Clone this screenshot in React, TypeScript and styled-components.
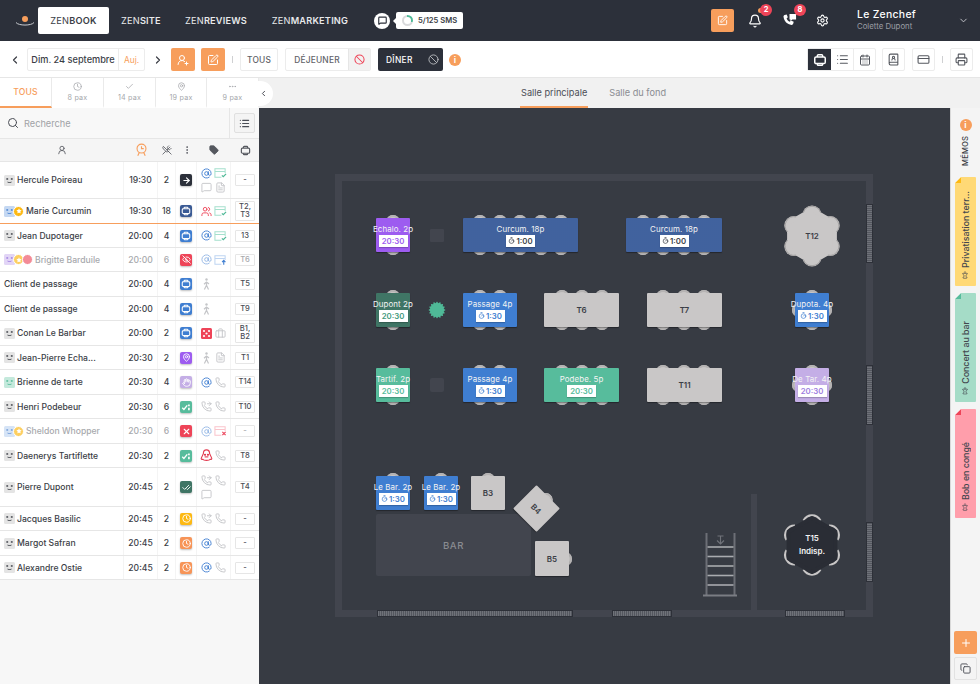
import React from "react";
import styled, { createGlobalStyle } from "styled-components";
import {
  ChevronLeft, ChevronRight, ChevronDown, UserRoundPlus, SquarePen, Ban, Clock, Check, MapPin, Ellipsis,
  Search, CalendarDays, BookUser, CreditCard, Printer, Bell, Settings, MessageSquare, AtSign,
  Phone, Users, Briefcase, X, ArrowRight, EyeOff, Timer, Plus, Copy, Pin,
  UtensilsCrossed, EllipsisVertical, Tag, UserRound, List, PhoneForwarded, CheckCheck, FileText, Hand, Star,
} from "lucide-react";

const GlobalStyle = createGlobalStyle`
  html, body { margin: 0; padding: 0; height: 100%; }
  body { font-family: Inter, "Open Sans", "Liberation Sans", sans-serif; color: #3b3e46; background: #fff; }
  #root { height: 100%; }
  * { box-sizing: border-box; }
`;

const FX = 259;
const FY = 108;
const ORANGE = "#f79e5c";
const DARK = "#2c303a";

/* ---------- drawn icons ---------- */
const TableIcon = ({ size = 12, color = "currentColor" }: { size?: number; color?: string }) => (
  <svg width={size} height={size} viewBox="0 0 16 16" fill="none" stroke={color} strokeWidth="1.7">
    <rect x="2" y="4.5" width="12" height="7.5" rx="1.5" />
    <path d="M5 4.5V3a1 1 0 0 1 1-1h4a1 1 0 0 1 1 1v1.5M5 12v1a1 1 0 0 0 1 1h4a1 1 0 0 0 1-1v-1" />
  </svg>
);
const Face = ({ color = "#3b3e46" }: { color?: string }) => (
  <svg width="9" height="9" viewBox="0 0 10 10" fill={color}>
    <rect x="1.5" y="2.5" width="2" height="1.6" />
    <rect x="6.5" y="2.5" width="2" height="1.6" />
    <path d="M3 6.2c1.2.9 2.8.9 4 0l.4.8c-1.4 1.2-3.4 1.2-4.8 0z" />
  </svg>
);
const CardMark = ({ kind }: { kind: "check" | "up" | "x" }) => {
  const c = kind === "check" ? "#a5e0cd" : kind === "up" ? "#bfd5f2" : "#fac4cb";
  const m = kind === "check" ? "#4fb997" : kind === "up" ? "#3f7ed1" : "#ec4a60";
  return (
    <svg width="13" height="12" viewBox="0 0 14 12" fill="none" strokeWidth="1.1">
      <path d="M8 10.5H1V1.5h11V6M1 4.5h11" stroke={c} />
      {kind === "check" && <path d="M8.5 8.5l1.5 1.5 3-3" stroke={m} strokeWidth="1.3" />}
      {kind === "up" && <path d="M10.5 11V6.5M8.7 8.2l1.8-1.8 1.8 1.8" stroke={m} strokeWidth="1.2" />}
      {kind === "x" && <path d="M9 7l3.5 3.5M12.5 7L9 10.5" stroke={m} strokeWidth="1.3" />}
    </svg>
  );
};
const Sheep = () => (
  <svg width="13" height="13" viewBox="0 0 14 14" fill="none" stroke="#e13a4f" strokeWidth="1.2">
    <path d="M7 1C4.6 1 3.6 3 3.6 5L1.4 9.8c-.5 1.3.8 1.8 1.6 1.2.9 1.7 7.1 1.7 8 0 .8.6 2.1.1 1.6-1.2L10.4 5C10.4 3 9.4 1 7 1z" />
    <circle cx="5.4" cy="6.2" r=".6" fill="#e13a4f" />
    <circle cx="8.6" cy="6.2" r=".6" fill="#e13a4f" />
    <path d="M5 8.5h4" />
  </svg>
);
const Walker = () => (
  <svg width="11" height="12" viewBox="0 0 11 12" fill="#c4c5c8" stroke="#c4c5c8">
    <circle cx="5.5" cy="1.5" r="1.2" stroke="none" />
    <path d="M5.5 3.4v4M5.5 7.2L3.4 11.4M5.5 7.2l2 4.2M5.5 4L3 6.2M5.5 4l2.5 2" fill="none" strokeWidth="1.2" />
  </svg>
);
const Dice = () => (
  <svg width="11" height="11" viewBox="0 0 11 11">
    <rect width="11" height="11" rx="1.5" fill="#ee4458" />
    {[[3, 3], [8, 3], [5.5, 5.5], [3, 8], [8, 8]].map(([x, y]) => (
      <circle key={`${x}${y}`} cx={x} cy={y} r="1.1" fill="#fff" />
    ))}
  </svg>
);
const SentMark = () => (
  <svg width="10" height="10" viewBox="0 0 12 12" fill="none" stroke="#fff" strokeWidth="1.6">
    <path d="M1.5 7l2 2 4-5" />
    <path d="M9.5 7v3M9.5 3v2" strokeWidth="2" />
  </svg>
);
const HeaderClock = () => (
  <svg width="13" height="14" viewBox="0 0 14 15" fill="none" stroke={ORANGE} strokeWidth="1.2">
    <circle cx="7" cy="6" r="4.8" />
    <path d="M7 3.4V6h2.4M4.5 10.5L3 13.6M9.5 10.5L11 13.6" />
  </svg>
);
const PhoneBubble = () => (
  <svg width="15" height="15" viewBox="0 0 16 16" fill="#fff">
    <path d="M2.8 2.2l2.2-.6 1.2 3-1.3 1.2c.6 1.5 1.8 2.8 3.4 3.5l1.2-1.3 3 1.2-.6 2.3c-.2.8-1 1.3-1.8 1.2C5.6 12.2 2.4 9 1.6 4c-.1-.8.4-1.6 1.2-1.8z" />
    <path d="M8 1h7v6H11L9 8.6V7H8z" />
  </svg>
);
const Logo = () => (
  <svg width="20" height="14" viewBox="0 0 20 14" fill="none">
    <circle cx="10" cy="5" r="3" fill={ORANGE} />
    <path d="M1 8.5c2.5 3.4 15.5 3.4 18 0" stroke="#c9cbd0" strokeWidth="1" />
  </svg>
);
const FloorHatch = styled.div<{ $x: number; $y: number; $w: number; $h: number }>`
  position: absolute;
  left: ${(p) => p.$x - FX}px;
  top: ${(p) => p.$y - FY}px;
  width: ${(p) => p.$w}px;
  height: ${(p) => p.$h}px;
  background: repeating-linear-gradient(90deg, #6f7279 0 1px, #54575f 1px 2px);
  border: 1px solid #2d3038;
`;
const FloorHatchV = styled(FloorHatch)`
  background: repeating-linear-gradient(0deg, #6f7279 0 1px, #54575f 1px 2px);
`;

/* ---------- top bar ---------- */
const Page = styled.div`
  width: 980px;
  height: 684px;
  overflow: hidden;
  display: flex;
  flex-direction: column;
`;
const TopBar = styled.header`
  height: 41px;
  flex: none;
  background: ${DARK};
  display: flex;
  align-items: center;
  color: #fff;
  padding-left: 15px;
`;
const Nav = styled.nav`
  display: flex;
  align-items: center;
  margin-left: 3px;
`;
const NavItem = styled.div<{ $active?: boolean; $w: number }>`
  width: ${(p) => p.$w}px;
  height: 27px;
  display: flex;
  align-items: center;
  justify-content: center;
  font-size: 9.2px;
  letter-spacing: 0.2px;
  font-weight: 400;
  color: ${(p) => (p.$active ? "#3b3e46" : "#e8e9eb")};
  background: ${(p) => (p.$active ? "#fff" : "transparent")};
  border-radius: 2px;
  b { font-weight: 600; }
`;
const ChatDot = styled.div`
  width: 16px;
  height: 16px;
  border-radius: 50%;
  background: #fff;
  color: ${DARK};
  display: flex;
  align-items: center;
  justify-content: center;
`;
const SmsPill = styled.div`
  position: relative;
  margin-left: 6px;
  width: 67px;
  height: 17px;
  background: #fff;
  border-radius: 2px;
  display: flex;
  align-items: center;
  gap: 5px;
  padding-left: 6px;
  font-size: 7.6px;
  font-weight: 600;
  color: #3b3e46;
  &::before {
    content: "";
    position: absolute;
    left: -3px;
    top: 6px;
    border: 3px solid transparent;
    border-left: 0;
    border-right-color: #fff;
  }
`;
const Ring = styled.div`
  width: 11px;
  height: 11px;
  border-radius: 50%;
  background: conic-gradient(#4fb997 0 30%, #d9dadc 30% 100%);
  display: flex;
  align-items: center;
  justify-content: center;
  &::after {
    content: "";
    width: 7px;
    height: 7px;
    border-radius: 50%;
    background: #fff;
  }
`;
const TopRight = styled.div`
  margin-left: auto;
  display: flex;
  align-items: center;
`;
const OrangeSquare = styled.div<{ $w?: number; $h?: number }>`
  width: ${(p) => p.$w ?? 24}px;
  height: ${(p) => p.$h ?? 23}px;
  background: ${ORANGE};
  border-radius: 2px;
  display: flex;
  align-items: center;
  justify-content: center;
  color: #fff;
  flex: none;
`;
const BellSlot = styled.div<{ $w: number }>`
  position: relative;
  width: ${(p) => p.$w}px;
  height: 22px;
  display: flex;
  align-items: center;
  justify-content: center;
  color: #fff;
`;
const Badge = styled.span`
  position: absolute;
  top: -6px;
  right: -2px;
  width: 12px;
  height: 12px;
  border-radius: 50%;
  background: #ee4458;
  color: #fff;
  font-size: 7.5px;
  font-weight: 700;
  display: flex;
  align-items: center;
  justify-content: center;
`;
const NotifDot = styled.span`
  position: absolute;
  top: -2px;
  right: 7px;
  width: 5px;
  height: 5px;
  border-radius: 50%;
  background: ${ORANGE};
`;
const User = styled.div`
  width: 101px;
  margin-left: 17px;
  line-height: 1;
`;
const UserName = styled.div`
  font-size: 10.4px;
  letter-spacing: 0.3px;
  font-weight: 500;
  color: #fff;
`;
const UserSub = styled.div`
  font-size: 7.8px;
  color: #9a9da4;
  margin-top: 3px;
`;
const ChevronSlot = styled.div`
  width: 22px;
  color: #c9cbd0;
  display: flex;
`;

/* ---------- tool bar ---------- */
const ToolBar = styled.div`
  height: 36px;
  flex: none;
  background: #fff;
  display: flex;
  align-items: center;
  padding: 1px 7px 0 9px;
  color: #4a4d55;
`;
const Arrow = styled.div<{ $w: number }>`
  width: ${(p) => p.$w}px;
  display: flex;
  color: #3b3e46;
`;
const BoxGroup = styled.div`
  display: flex;
  height: 23px;
  border: 1px solid #ececec;
  border-radius: 2px;
  background: #fff;
  flex: none;
`;
const DateText = styled.div`
  width: 91px;
  display: flex;
  align-items: center;
  justify-content: center;
  font-size: 9.2px;
  font-weight: 500;
  color: #3b3e46;
  border-right: 1px solid #ececec;
  white-space: nowrap;
`;
const TodayText = styled.div`
  width: 25px;
  display: flex;
  align-items: center;
  justify-content: center;
  font-size: 8.4px;
  color: ${ORANGE};
`;
const Sep = styled.span`
  width: 1px;
  height: 7px;
  background: #cfd0d2;
  flex: none;
`;
const TextBtn = styled.div<{ $w: number }>`
  width: ${(p) => p.$w}px;
  display: flex;
  align-items: center;
  justify-content: center;
  font-size: 8.4px;
  letter-spacing: 0.2px;
  font-weight: 500;
  color: #5f6268;
`;
const BanCell = styled.div`
  width: 22px;
  background: #f2f2f2;
  border-left: 1px solid #e6e6e6;
  display: flex;
  align-items: center;
  justify-content: center;
  color: #ee4458;
`;
const DarkSegment = styled.div`
  width: 65px;
  height: 23px;
  background: ${DARK};
  border-radius: 2px;
  display: flex;
  align-items: center;
  color: #fff;
  font-size: 8.4px;
  font-weight: 500;
  padding-left: 8px;
  gap: 15px;
  letter-spacing: 0.3px;
  flex: none;
  svg { color: #b9bbc0; }
`;
const InfoDot = styled.div`
  width: 12px;
  height: 12px;
  border-radius: 50%;
  background: ${ORANGE};
  color: #fff;
  font-size: 8.5px;
  font-weight: 800;
  font-family: "Liberation Sans", sans-serif;
  display: flex;
  align-items: center;
  justify-content: center;
  flex: none;
`;
const Spacer = styled.div<{ $w: number }>`
  width: ${(p) => p.$w}px;
  flex: none;
`;
const Grow = styled.div`
  flex: 1;
`;
const IconCell = styled.div<{ $on?: boolean; $line?: boolean; $w?: number }>`
  width: ${(p) => p.$w ?? 21}px;
  display: flex;
  align-items: center;
  justify-content: center;
  color: ${(p) => (p.$on ? "#fff" : "#55585f")};
  background: ${(p) => (p.$on ? DARK : "transparent")};
  border-left: ${(p) => (p.$line ? "1px solid #ececec" : "0")};
`;

/* ---------- sub bar ---------- */
const SubBar = styled.div`
  height: 31px;
  flex: none;
  display: flex;
  border-top: 1px solid #e6e6e6;
  background: #f1f1f1;
`;
const Tabs = styled.div`
  width: 259px;
  flex: none;
  display: grid;
  grid-template-columns: 52px 52px 52px 51px 52px;
  background: #fff;
  position: relative;
`;
const Tab = styled.div<{ $active?: boolean }>`
  display: flex;
  flex-direction: column;
  align-items: center;
  justify-content: center;
  gap: 3px;
  border-right: 1px solid #eaeaea;
  border-bottom: 2px solid ${(p) => (p.$active ? ORANGE : "transparent")};
  color: ${(p) => (p.$active ? ORANGE : "#a5a7ab")};
  font-size: ${(p) => (p.$active ? "8.6px" : "7.2px")};
  font-weight: ${(p) => (p.$active ? 500 : 400)};
  letter-spacing: 0.2px;
  line-height: 1;
`;
const Collapse = styled.div`
  position: absolute;
  left: 253px;
  top: 3px;
  width: 20px;
  height: 25px;
  background: #fff;
  border-radius: 0 13px 13px 0;
  color: #4a4d55;
  display: flex;
  align-items: center;
  justify-content: center;
`;
const Rooms = styled.div`
  flex: 1;
  display: flex;
  padding-left: 261px;
  gap: 20px;
`;
const Room = styled.div<{ $active?: boolean }>`
  display: flex;
  align-items: center;
  padding: 0 1px;
  font-size: 9.2px;
  color: ${(p) => (p.$active ? "#4a4d55" : "#8a8c91")};
  border-bottom: 2px solid ${(p) => (p.$active ? ORANGE : "transparent")};
`;

/* ---------- body ---------- */
const Body = styled.div`
  flex: 1;
  display: flex;
  min-height: 0;
`;
const Left = styled.aside`
  width: 259px;
  flex: none;
  background: #f7f7f7;
  display: flex;
  flex-direction: column;
`;
const SearchRow = styled.div`
  height: 31px;
  flex: none;
  display: flex;
  align-items: center;
  background: #f8f8f8;
  border-bottom: 1px solid #e6e6e6;
  padding-left: 7px;
  color: #a0a2a6;
  font-size: 9.2px;
  gap: 5px;
  svg { color: #4a4d55; }
`;
const SearchList = styled.div`
  margin-left: auto;
  width: 30px;
  height: 31px;
  border-left: 1px solid #e6e6e6;
  display: flex;
  align-items: center;
  justify-content: center;
`;
const SearchInner = styled.div`
  width: 21px;
  height: 20px;
  border: 1px solid #e0e0e0;
  background: #f4f4f4;
  border-radius: 2px;
  display: flex;
  align-items: center;
  justify-content: center;
`;
const columns = "124px 34px 18px 21px 34px 28px";
const HeadRow = styled.div`
  height: 23px;
  flex: none;
  display: grid;
  grid-template-columns: ${columns};
  background: #f5f5f5;
  border-bottom: 1px solid #e6e6e6;
  & > div {
    display: flex;
    align-items: center;
    justify-content: center;
    color: #55585f;
  }
`;
const Row = styled.div<{ $h: number; $mark?: boolean }>`
  height: ${(p) => p.$h}px;
  flex: none;
  display: grid;
  grid-template-columns: ${columns};
  background: #fff;
  border-bottom: 1px solid ${(p) => (p.$mark ? ORANGE : "#e6e6e6")};
`;
const Cell = styled.div<{ $faded?: boolean }>`
  display: flex;
  align-items: center;
  justify-content: center;
  border-right: 1px solid #f4f4f4;
  font-size: 8.6px;
  font-weight: 500;
  color: ${(p) => (p.$faded ? "#a7a9ad" : "#3b3e46")};
  &:last-child { border-right: 0; }
`;
const NameCell = styled(Cell)`
  justify-content: flex-start;
  padding-left: 4px;
  gap: 2px;
  font-size: 8.6px;
  white-space: nowrap;
  overflow: hidden;
`;
const Avatars = styled.div`
  display: flex;
`;
const Avatar = styled.div<{ $bg: string }>`
  width: 11px;
  height: 11px;
  background: ${(p) => p.$bg};
  border-radius: 1.5px;
  display: flex;
  align-items: center;
  justify-content: center;
`;
const Pip = styled.div<{ $bg: string }>`
  width: 11px;
  height: 11px;
  margin-left: -2px;
  border-radius: 50%;
  background: ${(p) => p.$bg};
  border: 1.5px solid #fff;
  color: #fff;
  display: flex;
  align-items: center;
  justify-content: center;
`;
const Status = styled.div<{ $bg: string }>`
  width: 12px;
  height: 12px;
  background: ${(p) => p.$bg};
  border-radius: 2px;
  color: #fff;
  display: flex;
  align-items: center;
  justify-content: center;
  box-shadow: 0 1px 2px rgba(0, 0, 0, 0.25);
`;
const IconGrid = styled.div`
  display: grid;
  grid-template-columns: 14px 14px;
  grid-auto-rows: 14px;
  place-items: center;
`;
const TableBox = styled.div<{ $faded?: boolean }>`
  width: 20px;
  min-height: 12px;
  border: 1px solid #e6e6e6;
  border-radius: 1px;
  font-size: 7.6px;
  line-height: 8px;
  padding: 1px 0;
  text-align: center;
  color: ${(p) => (p.$faded ? "#a7a9ad" : "#4a4d55")};
`;

/* ---------- floor ---------- */
const Floor = styled.main`
  flex: 1;
  position: relative;
  background: #373b43;
  overflow: hidden;
`;
const Rect = styled.div<{ $x: number; $y: number; $w: number; $h: number; $bg: string; $r?: number }>`
  position: absolute;
  left: ${(p) => p.$x - FX}px;
  top: ${(p) => p.$y - FY}px;
  width: ${(p) => p.$w}px;
  height: ${(p) => p.$h}px;
  background: ${(p) => p.$bg};
  border-radius: ${(p) => p.$r ?? 0}px;
`;
const Walls = styled(Rect)`
  background: transparent;
  border: 7px solid #42454e;
`;
const BarBox = styled(Rect)`
  display: flex;
  align-items: center;
  justify-content: center;
  color: #8a8c91;
  font-size: 9.6px;
  letter-spacing: 0.6px;
  font-weight: 500;
`;
const TableWrap = styled.div<{ $x: number; $y: number; $w: number; $h: number; $rot?: number }>`
  position: absolute;
  left: ${(p) => p.$x - FX}px;
  top: ${(p) => p.$y - FY}px;
  width: ${(p) => p.$w}px;
  height: ${(p) => p.$h}px;
  transform: rotate(${(p) => p.$rot ?? 0}deg);
`;
const Chair = styled.div<{ $cx: number; $cy: number }>`
  position: absolute;
  left: ${(p) => p.$cx - 7}px;
  top: ${(p) => p.$cy - 7}px;
  width: 14px;
  height: 14px;
  border-radius: 50%;
  background: #c8c6c6;
  box-shadow: inset 0 0 0 2px #b5b3b3;
`;
const TableBody = styled.div<{ $bg: string; $dither?: boolean }>`
  position: absolute;
  inset: 0;
  background-color: ${(p) => p.$bg};
  background-image: ${(p) =>
    p.$dither ? "radial-gradient(rgba(90,130,200,.55) 0.6px, transparent 0.8px)" : "none"};
  background-size: 2px 2px;
  border-radius: 1px;
  box-shadow: 0 1px 1px rgba(0, 0, 0, 0.35);
  display: flex;
  flex-direction: column;
  align-items: center;
  justify-content: center;
  gap: 1px;
  font-size: 8px;
  font-weight: 600;
  color: #3b3e46;
`;
const TableName = styled.div`
  color: #f3f3f3;
  font-size: 7.9px;
  font-weight: 400;
  line-height: 10px;
  white-space: nowrap;
  letter-spacing: 0.1px;
`;
const TablePill = styled.div<{ $c: string }>`
  width: 29px;
  height: 12px;
  background: #fff;
  color: ${(p) => p.$c};
  font-size: 7.8px;
  font-weight: 600;
  display: flex;
  align-items: center;
  justify-content: center;
  gap: 1px;
  box-shadow: 0 1px 1px rgba(0, 0, 0, 0.2);
`;
const Burst = styled.svg<{ $x: number; $y: number }>`
  position: absolute;
  left: ${(p) => p.$x - FX}px;
  top: ${(p) => p.$y - FY}px;
`;
const RoundLabel = styled.div<{ $x: number; $y: number; $dark?: boolean }>`
  position: absolute;
  left: ${(p) => p.$x - FX}px;
  top: ${(p) => p.$y - FY}px;
  width: 62px;
  height: 62px;
  display: flex;
  flex-direction: column;
  align-items: center;
  justify-content: center;
  gap: 4px;
  font-size: 8px;
  font-weight: 600;
  line-height: 9px;
  color: ${(p) => (p.$dark ? "#f3f3f3" : "#3b3e46")};
`;

/* ---------- memos ---------- */
const Memos = styled.aside`
  width: 30px;
  flex: none;
  background: #f4f4f4;
  border-left: 1px solid #d9d9d9;
  display: flex;
  flex-direction: column;
  align-items: center;
  padding-top: 11px;
`;
const Vertical = styled.div`
  writing-mode: vertical-rl;
  transform: rotate(180deg);
  white-space: nowrap;
`;
const MemoTitle = styled(Vertical)`
  font-size: 7.6px;
  font-weight: 500;
  margin-top: 6px;
  height: 29px;
  text-align: center;
  color: #3b3e46;
  letter-spacing: 0.2px;
`;
const Note = styled.div<{ $bg: string; $corner: string; $mt: number }>`
  position: relative;
  width: 21px;
  height: 109px;
  margin-top: ${(p) => p.$mt}px;
  background: ${(p) => p.$bg};
  border-radius: 1px;
  &::before {
    content: "";
    position: absolute;
    left: 0;
    top: 0;
    border-style: solid;
    border-width: 0 0 6px 6px;
    border-color: transparent transparent ${(p) => p.$corner} transparent;
  }
  &::after {
    content: "";
    position: absolute;
    left: 0;
    top: 0;
    border-style: solid;
    border-width: 6px 6px 0 0;
    border-color: #f4f4f4 transparent transparent transparent;
  }
`;
const NoteText = styled(Vertical)`
  position: absolute;
  bottom: 7px;
  left: 5px;
  font-size: 8.8px;
  font-weight: 500;
  color: #43464e;
  display: flex;
  align-items: center;
  gap: 3px;
`;
const MemoActions = styled.div`
  margin-top: auto;
  display: flex;
  flex-direction: column;
  gap: 3px;
  margin-bottom: 4px;
`;
const GhostSquare = styled.div`
  width: 23px;
  height: 23px;
  border: 1px solid #e2e2e2;
  border-radius: 2px;
  display: flex;
  align-items: center;
  justify-content: center;
  color: #4a4d55;
`;

/* ---------- data ---------- */
type Ic = "at" | "cc" | "cu" | "cx" | "msg" | "doc" | "users" | "walk" | "dice" | "case" | "ph" | "pf" | "sheep";
const icon = (k: Ic, key: number, faded?: boolean) => {
  const o = faded ? 0.55 : 1;
  const g = "#c4c5c8";
  const s = 11;
  const map: Record<Ic, React.ReactNode> = {
    at: <AtSign size={s} color="#3f7ed1" strokeWidth={2} opacity={o} />,
    cc: <CardMark kind="check" />,
    cu: <CardMark kind="up" />,
    cx: <CardMark kind="x" />,
    msg: <MessageSquare size={s} color={g} />,
    doc: <FileText size={s} color={g} />,
    users: <Users size={s} color="#ee4458" />,
    walk: <Walker />,
    dice: <Dice />,
    case: <Briefcase size={s} color={g} />,
    ph: <Phone size={s} color={g} />,
    pf: <PhoneForwarded size={s} color={g} />,
    sheep: <Sheep />,
  };
  return <React.Fragment key={key}>{map[k]}</React.Fragment>;
};
const BLUE = "#3f7ed1";
const st = {
  arrow: [DARK, <ArrowRight size={9} strokeWidth={3} />],
  navy: ["#3a5a94", <TableIcon size={10} />],
  blue: [BLUE, <TableIcon size={10} />],
  eye: ["#ee4458", <EyeOff size={9} strokeWidth={2.4} />],
  pin: ["#9d5cf0", <MapPin size={9} strokeWidth={2.4} />],
  lilac: ["#c4aee6", <Hand size={9} strokeWidth={2.4} />],
  sent: ["#57bc9c", <SentMark />],
  x: ["#ee4458", <X size={9} strokeWidth={3} />],
  done: ["#3f7565", <CheckCheck size={9} strokeWidth={2.4} />],
  yellow: ["#fdb913", <Clock size={9} strokeWidth={2.4} />],
  orange: ["#f79457", <Clock size={9} strokeWidth={2.4} />],
} as const;
type Rw = {
  n: string; t: string; p: number; s: keyof typeof st; ic: Ic[]; tb: string; h: number;
  av?: string; fc?: string; pips?: string[]; faded?: boolean; mark?: boolean;
};
const rows: Rw[] = [
  { n: "Hercule Poireau", t: "19:30", p: 2, s: "arrow", ic: ["at", "cc", "msg", "doc"], tb: "-", h: 37, av: "#e4e4e4" },
  { n: "Marie Curcumin", t: "19:30", p: 18, s: "navy", ic: ["users", "cc"], tb: "T2, T3", h: 25, av: "#c5d8f2", fc: "#3f7ed1", pips: ["#fdb913"], mark: true },
  { n: "Jean Dupotager", t: "20:00", p: 4, s: "blue", ic: ["at", "cc"], tb: "13", h: 24, av: "#e4e4e4" },
  { n: "Brigitte Barduile", t: "20:00", p: 6, s: "eye", ic: ["at", "cu"], tb: "T6", h: 24, av: "#e2d5f6", fc: "#9d7ee0", pips: ["#fdcf60", "#f38b97"], faded: true },
  { n: "Client de passage", t: "20:00", p: 4, s: "blue", ic: ["walk"], tb: "T5", h: 25 },
  { n: "Client de passage", t: "20:00", p: 4, s: "blue", ic: ["walk"], tb: "T9", h: 24 },
  { n: "Conan Le Barbar", t: "20:00", p: 2, s: "blue", ic: ["dice", "case"], tb: "B1, B2", h: 25, av: "#e4e4e4" },
  { n: "Jean-Pierre Echa...", t: "20:30", p: 2, s: "pin", ic: ["walk", "doc"], tb: "T1", h: 24, av: "#e4e4e4" },
  { n: "Brienne de tarte", t: "20:30", p: 4, s: "lilac", ic: ["at", "ph"], tb: "T14", h: 25, av: "#c4e9dc", fc: "#4fb997" },
  { n: "Henri Podebeur", t: "20:30", p: 6, s: "sent", ic: ["pf", "ph"], tb: "T10", h: 24, av: "#e4e4e4" },
  { n: "Sheldon Whopper", t: "20:30", p: 6, s: "x", ic: ["at", "cx"], tb: "-", h: 25, av: "#d6e4f6", fc: "#6d9ad8", pips: ["#fdcf60"], faded: true },
  { n: "Daenerys Tartiflette", t: "20:30", p: 2, s: "sent", ic: ["sheep", "ph"], tb: "T8", h: 24, av: "#e4e4e4" },
  { n: "Pierre Dupont", t: "20:45", p: 2, s: "done", ic: ["pf", "ph", "msg"], tb: "T4", h: 39, av: "#e4e4e4" },
  { n: "Jacques Basilic", t: "20:45", p: 2, s: "yellow", ic: ["pf", "ph"], tb: "-", h: 24, av: "#e4e4e4" },
  { n: "Margot Safran", t: "20:45", p: 2, s: "orange", ic: ["at", "ph"], tb: "-", h: 25, av: "#e4e4e4" },
  { n: "Alexandre Ostie", t: "20:45", p: 2, s: "orange", ic: ["at", "ph"], tb: "-", h: 24, av: "#e4e4e4" },
];

const GREEN = "#57bc9c";
const GRAY = "#c9c7c7";
type Tb = {
  x: number; y: number; w: number; h: number; bg: string; top?: number[]; side?: ("l" | "r")[];
  name?: string; pill?: string; timer?: boolean; pc?: string; text?: string; dither?: boolean; rot?: number;
};
const R1 = 218, R2 = 293, R3 = 368, RB = 476;
const tables: Tb[] = [
  { x: 376, y: R1, w: 34, h: 34, bg: "#9d5cf0", top: [17], name: "Echalo. 2p", pill: "20:30", pc: "#9d5cf0" },
  { x: 463, y: R1, w: 115, h: 34, bg: "#38578f", dither: true, top: [17, 37, 57, 78, 98], name: "Curcum. 18p", pill: "1:00", timer: true, pc: "#3b3e46" },
  { x: 626, y: R1, w: 96, h: 34, bg: "#38578f", dither: true, top: [17, 37, 58, 78], name: "Curcum. 18p", pill: "1:00", timer: true, pc: "#3b3e46" },
  { x: 376, y: R2, w: 34, h: 34, bg: "#3f7565", top: [17], name: "Dupont 2p", pill: "20:30", pc: "#3f9a7c" },
  { x: 463, y: R2, w: 54, h: 34, bg: BLUE, top: [17, 37], name: "Passage 4p", pill: "1:30", timer: true, pc: BLUE },
  { x: 544, y: R2, w: 75, h: 34, bg: GRAY, top: [18, 38, 58], text: "T6" },
  { x: 647, y: R2, w: 75, h: 34, bg: GRAY, top: [16, 37, 57], text: "T7" },
  { x: 795, y: R2, w: 34, h: 34, bg: BLUE, top: [17], side: ["l", "r"], name: "Dupota. 4p", pill: "1:30", timer: true, pc: BLUE },
  { x: 376, y: R3, w: 34, h: 34, bg: GREEN, top: [17], name: "Tartif. 2p", pill: "20:30", pc: GREEN },
  { x: 463, y: R3, w: 54, h: 34, bg: BLUE, top: [17, 37], name: "Passage 4p", pill: "1:30", timer: true, pc: BLUE },
  { x: 544, y: R3, w: 75, h: 34, bg: GREEN, top: [18, 38, 58], name: "Podebe. 5p", pill: "20:30", pc: GREEN },
  { x: 647, y: R3, w: 75, h: 34, bg: GRAY, top: [16, 37, 57], text: "T11" },
  { x: 795, y: R3, w: 34, h: 34, bg: "#c4aee6", top: [17], side: ["l", "r"], name: "De Tar. 4p", pill: "20:30", pc: "#9d7ee0" },
];

function TableView({ t, bottom = true }: { t: Tb; bottom?: boolean }) {
  return (
    <TableWrap $x={t.x} $y={t.y} $w={t.w} $h={t.h} $rot={t.rot}>
      {(t.top ?? []).map((c, i) => <Chair key={i} $cx={c} $cy={4} />)}
      {bottom && (t.top ?? []).map((c, i) => <Chair key={"b" + i} $cx={c} $cy={t.h - 4} />)}
      {(t.side ?? []).map((s) => (
        <Chair key={s} $cx={s === "l" ? 4 : t.w - 4} $cy={t.h / 2} />
      ))}
      <TableBody $bg={t.bg} $dither={t.dither}>
        {t.name && <TableName>{t.name}</TableName>}
        {t.pill && (
          <TablePill $c={t.pc ?? "#3b3e46"}>
            {t.timer && <Timer size={7} strokeWidth={2.4} />}
            {t.pill}
          </TablePill>
        )}
        {t.text}
      </TableBody>
    </TableWrap>
  );
}

const hex = (cx: number, cy: number, r: number) =>
  [0, 1, 2, 3, 4, 5]
    .map((i) => {
      const a = (Math.PI / 180) * (-90 + 60 * i);
      return `${(cx + r * Math.cos(a)).toFixed(1)},${(cy + r * Math.sin(a)).toFixed(1)}`;
    })
    .join(" ");
const lobes = [0, 1, 2, 3, 4, 5].map((i) => (Math.PI / 180) * (-90 + 60 * i));
const arc = (a: number, dist: number, r: number, spread: number) => {
  const cx = 31 + dist * Math.cos(a);
  const cy = 32 + dist * Math.sin(a);
  const s = (spread * Math.PI) / 180;
  const x0 = cx + r * Math.cos(a - s);
  const y0 = cy + r * Math.sin(a - s);
  const x1 = cx + r * Math.cos(a + s);
  const y1 = cy + r * Math.sin(a + s);
  return `M${x0.toFixed(1)} ${y0.toFixed(1)}A${r} ${r} 0 0 1 ${x1.toFixed(1)} ${y1.toFixed(1)}`;
};

const Burst12 = () => {
  const pts: string[] = [];
  for (let i = 0; i < 32; i++) {
    const r = i % 2 ? 6.8 : 8.6;
    const a = (Math.PI * 2 * i) / 32;
    pts.push(`${(9 + r * Math.cos(a)).toFixed(1)},${(9 + r * Math.sin(a)).toFixed(1)}`);
  }
  return (
    <Burst $x={427.5} $y={301} width="18" height="18" viewBox="0 0 18 18">
      <polygon points={pts.join(" ")} fill="#4fb997" />
    </Burst>
  );
};

const RoundShape = ({ x, y, dark }: { x: number; y: number; dark?: boolean }) => (
  <Burst $x={x} $y={y} width="62" height="64" viewBox="0 0 62 64" fill="none">
    {dark ? (
      <>
        {lobes.map((a, i) => (
          <path key={i} d={arc(a, 20, 9.5, 62)} stroke="#c8c6c6" strokeWidth="2.2" />
        ))}
        <polygon points={hex(31, 32, 27)} fill="#2a2d35" stroke="#2a2d35" strokeWidth="4" strokeLinejoin="round" />
      </>
    ) : (
      <>
        {lobes.map((a, i) => (
          <circle key={i} cx={31 + 21 * Math.cos(a)} cy={32 + 21 * Math.sin(a)} r="9.5" fill="#c8c6c6" />
        ))}
        <polygon points={hex(31, 32, 26.5)} fill={GRAY} stroke={GRAY} strokeWidth="4" strokeLinejoin="round" />
        {lobes.map((a, i) => (
          <path key={i} d={arc(a, 20.5, 9, 72)} stroke="#9f9d9d" strokeWidth="0.9" />
        ))}
      </>
    )}
  </Burst>
);

const LadderSvg = () => (
  <Burst $x={703} $y={533} width="35" height="65" viewBox="0 0 35 65" fill="none">
    <path d="M3.5 0v62M31.5 0v62" stroke="#6c6f76" strokeWidth="2" />
    <path d="M0 62.5h34" stroke="#7a7d83" strokeWidth="2" />
    {[14, 23.5, 33, 42.5, 52].map((y) => (
      <path key={y} d={`M4.5 ${y}h26`} stroke="#a9abaf" strokeWidth="1.6" />
    ))}
    <path d="M17.5 3v8M14 7.5l3.5 3.5 3.5-3.5M14.5 3h6" stroke="#70737a" strokeWidth="1.1" />
  </Burst>
);

export default function App() {
  return (
    <Page>
      <GlobalStyle />
      <TopBar>
        <Logo />
        <Nav>
          <NavItem $active $w={71}>ZEN<b>BOOK</b></NavItem>
          <NavItem $w={64}>ZEN<b>SITE</b></NavItem>
          <NavItem $w={86}>ZEN<b>REVIEWS</b></NavItem>
          <NavItem $w={102}>ZEN<b>MARKETING</b></NavItem>
        </Nav>
        <Spacer $w={13} />
        <ChatDot><MessageSquare size={9} strokeWidth={3} /></ChatDot>
        <SmsPill><Ring />5/125 SMS</SmsPill>
        <TopRight>
          <OrangeSquare $w={23}><SquarePen size={11} /></OrangeSquare>
          <Spacer $w={6} />
          <BellSlot $w={30}><Bell size={14} /><NotifDot /><Badge>2</Badge></BellSlot>
          <Spacer $w={4} />
          <BellSlot $w={30}><PhoneBubble /><Badge>8</Badge></BellSlot>
          <BellSlot $w={36}><Settings size={13} /></BellSlot>
          <User>
            <UserName>Le Zenchef</UserName>
            <UserSub>Colette Dupont</UserSub>
          </User>
          <ChevronSlot><ChevronDown size={11} /></ChevronSlot>
        </TopRight>
      </TopBar>

      <ToolBar>
        <Arrow $w={18}><ChevronLeft size={12} strokeWidth={2.4} /></Arrow>
        <BoxGroup>
          <DateText>Dim. 24 septembre</DateText>
          <TodayText>Auj.</TodayText>
        </BoxGroup>
        <Spacer $w={7} />
        <Arrow $w={19}><ChevronRight size={12} strokeWidth={2.4} /></Arrow>
        <OrangeSquare><UserRoundPlus size={12} /></OrangeSquare>
        <Spacer $w={6} />
        <OrangeSquare><SquarePen size={12} /></OrangeSquare>
        <Spacer $w={7} />
        <Sep />
        <Spacer $w={7} />
        <BoxGroup><TextBtn $w={36}>TOUS</TextBtn></BoxGroup>
        <Spacer $w={7} />
        <BoxGroup>
          <TextBtn $w={62}>DÉJEUNER</TextBtn>
          <BanCell><Ban size={11} strokeWidth={2.2} /></BanCell>
        </BoxGroup>
        <Spacer $w={7} />
        <DarkSegment>DÎNER<Ban size={11} /></DarkSegment>
        <Spacer $w={6} />
        <InfoDot>i</InfoDot>
        <Grow />
        <BoxGroup>
          <IconCell $on $w={23}><TableIcon size={14} /></IconCell>
          <IconCell $w={22}><List size={13} /></IconCell>
          <IconCell $line $w={22}><CalendarDays size={12} /></IconCell>
        </BoxGroup>
        <Spacer $w={6} />
        <BoxGroup><IconCell><BookUser size={13} /></IconCell></BoxGroup>
        <Spacer $w={7} />
        <BoxGroup><IconCell><CreditCard size={13} /></IconCell></BoxGroup>
        <Spacer $w={7} />
        <Sep />
        <Spacer $w={7} />
        <BoxGroup><IconCell><Printer size={13} /></IconCell></BoxGroup>
      </ToolBar>

      <SubBar>
        <Tabs>
          <Tab $active>TOUS</Tab>
          <Tab><Clock size={9} />8 pax</Tab>
          <Tab><Check size={9} />14 pax</Tab>
          <Tab><MapPin size={9} />19 pax</Tab>
          <Tab><Ellipsis size={9} />9 pax</Tab>
          <Collapse><ChevronLeft size={9} strokeWidth={2.6} /></Collapse>
        </Tabs>
        <Rooms>
          <Room $active>Salle principale</Room>
          <Room>Salle du fond</Room>
        </Rooms>
      </SubBar>

      <Body>
        <Left>
          <SearchRow>
            <Search size={12} />Recherche
            <SearchList><SearchInner><List size={11} strokeWidth={2.6} /></SearchInner></SearchList>
          </SearchRow>
          <HeadRow>
            <div><UserRound size={10} /></div>
            <div><HeaderClock /></div>
            <div><UtensilsCrossed size={10} /></div>
            <div><EllipsisVertical size={10} /></div>
            <div><Tag size={10} fill="#55585f" /></div>
            <div><TableIcon size={11} /></div>
          </HeadRow>
          {rows.map((r, i) => (
            <Row key={i} $h={r.h} $mark={r.mark}>
              <NameCell $faded={r.faded}>
                {r.av && (
                  <Avatars>
                    <Avatar $bg={r.av}><Face color={r.fc} /></Avatar>
                    {(r.pips ?? []).map((c, j) => (
                      <Pip key={c} $bg={c}>{j === 0 && <Star size={6} fill="#fff" strokeWidth={0} />}</Pip>
                    ))}
                  </Avatars>
                )}
                {r.n}
              </NameCell>
              <Cell $faded={r.faded}>{r.t}</Cell>
              <Cell $faded={r.faded}>{r.p}</Cell>
              <Cell><Status $bg={st[r.s][0]}>{st[r.s][1]}</Status></Cell>
              <Cell><IconGrid>{r.ic.map((k, j) => icon(k, j, r.faded))}</IconGrid></Cell>
              <Cell><TableBox $faded={r.faded}>{r.tb}</TableBox></Cell>
            </Row>
          ))}
        </Left>

        <Floor>
          <Walls $x={335} $y={174} $w={538} $h={443} $bg="transparent" />
          <FloorHatchV $x={866} $y={204} $w={7} $h={59} />
          <FloorHatchV $x={866} $y={365} $w={7} $h={60} />
          <FloorHatchV $x={866} $y={522} $w={7} $h={60} />
          <FloorHatch $x={377} $y={610} $w={196} $h={7} />
          <FloorHatch $x={612} $y={610} $w={60} $h={7} />
          <FloorHatch $x={785} $y={610} $w={60} $h={7} />
          <Rect $x={751} $y={494} $w={6} $h={116} $bg="#42454e" />
          <Rect $x={430} $y={229} $w={14} $h={13} $bg="#42454e" $r={1} />
          <Rect $x={430} $y={378} $w={14} $h={14} $bg="#42454e" $r={2} />
          <Burst12 />
          {tables.map((t, i) => <TableView key={i} t={t} />)}
          <RoundShape x={781} y={204} />
          <RoundLabel $x={781} $y={205}>T12</RoundLabel>
          <BarBox $x={376} $y={514} $w={155} $h={62} $bg="#42454e" $r={2}>BAR</BarBox>
          <TableView bottom={false} t={{ x: 376, y: RB, w: 34, h: 34, bg: BLUE, top: [17], name: "Le Bar. 2p", pill: "1:30", timer: true, pc: BLUE }} />
          <TableView bottom={false} t={{ x: 424, y: RB, w: 34, h: 34, bg: BLUE, top: [17], name: "Le Bar. 2p", pill: "1:30", timer: true, pc: BLUE }} />
          <TableView bottom={false} t={{ x: 471, y: RB, w: 34, h: 34, bg: GRAY, top: [17], text: "B3" }} />
          <TableView bottom={false} t={{ x: 520, y: 492, w: 33, h: 33, bg: GRAY, top: [17], text: "B4", rot: 45 }} />
          <TableView t={{ x: 535, y: 541, w: 34, h: 35, bg: GRAY, side: ["r"], text: "B5" }} />
          <LadderSvg />
          <RoundShape x={781} y={513} dark />
          <RoundLabel $x={781} $y={514} $dark>
            <div>T15</div>
            <div>Indisp.</div>
          </RoundLabel>
        </Floor>

        <Memos>
          <InfoDot>i</InfoDot>
          <MemoTitle>MÉMOS</MemoTitle>
          <Note $bg="#ffd976" $corner="#fdb913" $mt={11}>
            <NoteText><Pin size={8} />Privatisation terr...</NoteText>
          </Note>
          <Note $bg="#a5dcc7" $corner="#57bc9c" $mt={7}>
            <NoteText><Pin size={8} />Concert au bar</NoteText>
          </Note>
          <Note $bg="#ff9eab" $corner="#ee4458" $mt={7}>
            <NoteText><Pin size={8} />Bob en congé</NoteText>
          </Note>
          <MemoActions>
            <OrangeSquare $w={23} $h={23}><Plus size={12} /></OrangeSquare>
            <GhostSquare><Copy size={11} /></GhostSquare>
          </MemoActions>
        </Memos>
      </Body>
    </Page>
  );
}
